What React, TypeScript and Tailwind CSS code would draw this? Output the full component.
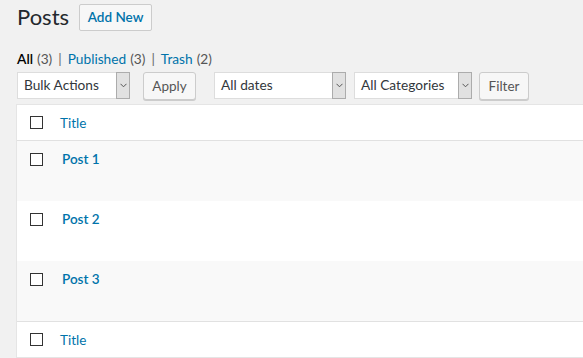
import React from "react";

const Chevron = () => (
  <svg width="7" height="5" viewBox="0 0 7 5" fill="none">
    <path d="M0.5 0.8 L3.5 3.8 L6.5 0.8" stroke="#555" strokeWidth="1" />
  </svg>
);

function Select({ label, width }: { label: string; width: string }) {
  return (
    <div className={`${width} h-[27px] bg-white border border-[#ddd] flex items-center pl-[6px] text-[13.7px] text-[#32373c] relative`}>
      <span>{label}</span>
      <div className="absolute right-[-1px] top-[-1px] bottom-[-1px] w-[14px] bg-[#e1e1e1] border border-[#acacac] flex items-center justify-center">
        <Chevron />
      </div>
    </div>
  );
}

function Btn({ label, width }: { label: string; width: string }) {
  return (
    <div className={`${width} h-[28px] bg-[#f7f7f7] border border-[#ccc] rounded-[3px] shadow-[0_1px_0_#ccc] flex items-center justify-center text-[13.5px] text-[#555]`}>
      {label}
    </div>
  );
}

const Check = () => <div className="w-[13px] h-[13px] border border-[#333] bg-white shrink-0" />;

function Row({ title, bg }: { title: string; bg: string }) {
  return (
    <div className={`h-[60px] ${bg} flex items-start pt-[12px]`}>
      <div className="w-[26px] flex justify-end shrink-0">
        <Check />
      </div>
      <span className="ml-[19px] text-[13.5px] font-semibold text-[#0073aa] leading-[13px]">{title}</span>
    </div>
  );
}

function HeadRow({ top }: { top?: boolean }) {
  return (
    <div className={`h-[36px] flex items-center ${top ? "border-b" : "border-t"} border-[#e1e1e1]`}>
      <div className="w-[26px] flex justify-end shrink-0">
        <Check />
      </div>
      <span className="ml-[17px] pt-[2px] text-[13.5px] text-[#0073aa]">Title</span>
    </div>
  );
}

export default function App() {
  return (
    <div className="w-[583px] h-[358px] overflow-hidden bg-[#f1f1f1]" style={{ fontFamily: "Lato, sans-serif" }}>
      <div className="pl-4 w-[700px]">
        <div className="flex items-start h-[37px]">
          <h1 className="text-[22px] leading-[30px] text-[#23282d] pt-[2px] pl-[1px]">Posts</h1>
          <div className="ml-[10px] mt-[4px] h-[27px] bg-[#f7f7f7] border border-[#ccc] rounded-[2px] flex items-center text-[13.5px] font-semibold text-[#0073aa] w-[73px] justify-center">
            Add New
          </div>
        </div>
        <div className="mt-[14px] h-[16px] flex items-center text-[13.7px] text-[#555] pl-[1px]">
          <span className="font-semibold text-black">All</span>
          <span className="ml-[4px]">(3)</span>
          <span className="mx-[6px] text-[#666]">|</span>
          <span className="text-[#0073aa]">Published</span>
          <span className="ml-[4px]">(3)</span>
          <span className="mx-[6px] text-[#666]">|</span>
          <span className="text-[#0073aa]">Trash</span>
          <span className="ml-[4px]">(2)</span>
        </div>
        <div className="mt-[5px] flex items-start pl-[1px]">
          <Select label="Bulk Actions" width="w-[113px]" />
          <div className="ml-[13px]">
            <Btn label="Apply" width="w-[53px]" />
          </div>
          <div className="ml-[18px]">
            <Select label="All dates" width="w-[132px]" />
          </div>
          <div className="ml-[8px]">
            <Select label="All Categories" width="w-[118px]" />
          </div>
          <div className="ml-[7px]">
            <Btn label="Filter" width="w-[50px]" />
          </div>
        </div>
        <div className="mt-[4px] border border-[#e5e5e5] bg-white">
          <HeadRow top />
          <Row title="Post 1" bg="bg-[#f9f9f9]" />
          <Row title="Post 2" bg="bg-white" />
          <Row title="Post 3" bg="bg-[#f9f9f9]" />
          <HeadRow />
        </div>
      </div>
    </div>
  );
}
